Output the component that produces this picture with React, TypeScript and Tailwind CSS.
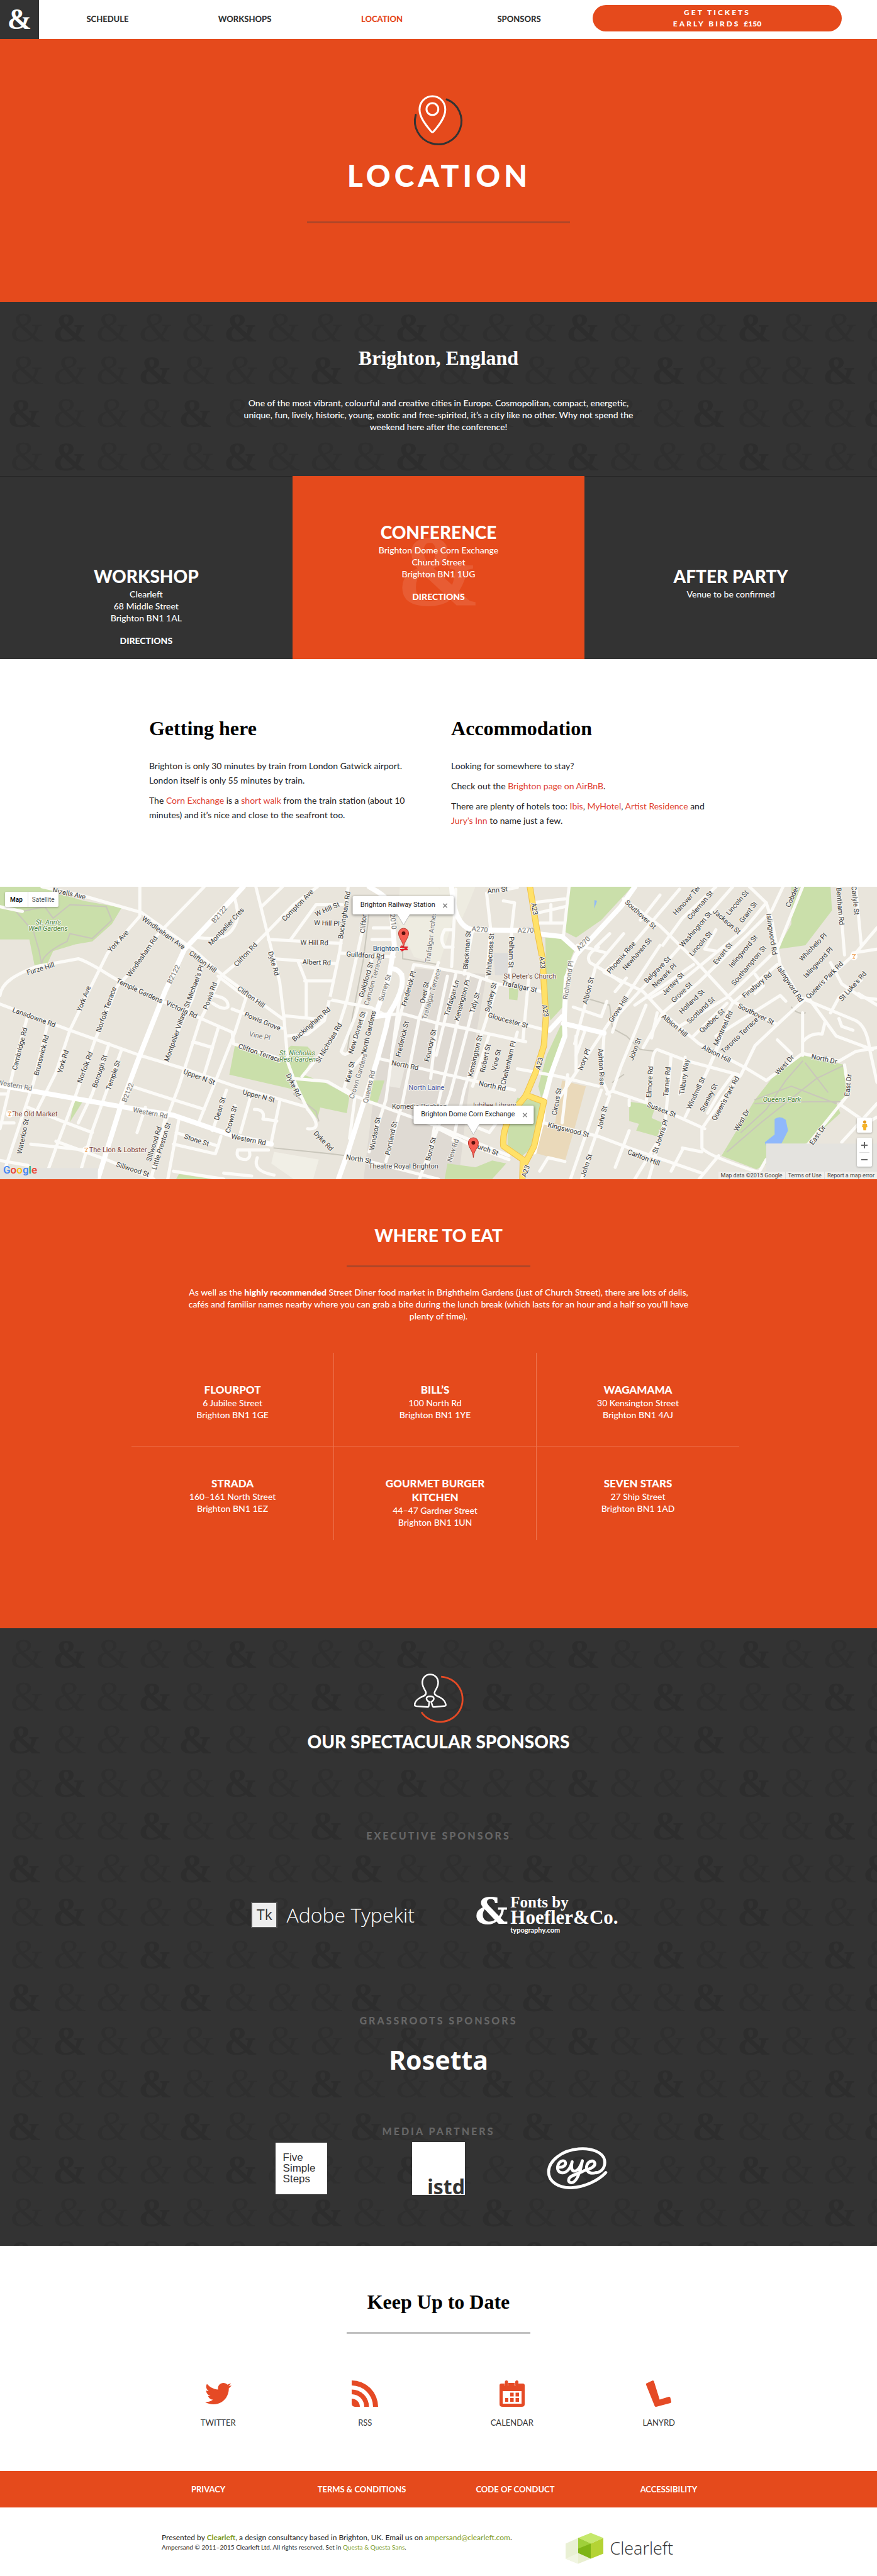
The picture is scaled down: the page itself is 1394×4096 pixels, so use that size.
import React from "react";
import { FaTwitter } from "react-icons/fa";

const SANS = "font-[Lato,'Open_Sans',sans-serif]";
const SERIF = "font-['Liberation_Serif',serif]";

/* ---------- shared pieces ---------- */

const AMP_ROWS: [number, string[]][] = [
  [41, ["r", "h", "r", "l"]],
  [109, ["r", "l", "r", "h"]],
  [177, ["h", "r", "l", "r"]],
];

function AmpersandPattern({ id }: { id: string }) {
  return (
    <svg className="absolute inset-0 h-full w-full" aria-hidden="true">
      <defs>
        <pattern id={id} width="272" height="205" patternUnits="userSpaceOnUse">
          {AMP_ROWS.map(([y, kinds]) =>
            kinds.map((k, i) => (
              <text
                key={`${y}-${i}`}
                x={43 + i * 68 - (k === "h" && i === 0 ? 4 : 0)}
                y={y + 22}
                textAnchor="middle"
                fontSize={k === "h" ? 66 : 68}
                fontFamily="Liberation Serif, serif"
                fontWeight={k === "h" ? 700 : 400}
                fontStyle={k === "l" ? "italic" : "normal"}
                fill={k === "h" ? "#2d2d2d" : "#2f2f2f"}
              >
                &amp;
              </text>
            )),
          )}
        </pattern>
      </defs>
      <rect width="100%" height="100%" fill={`url(#${id})`} />
    </svg>
  );
}

/* ---------- header ---------- */

function Header() {
  const links = ["Schedule", "Workshops", "Location", "Sponsors"];
  return (
    <header className="flex h-[62px] bg-white">
      <a href="#home" aria-label="Ampersand" className={`flex w-[62px] shrink-0 items-center justify-center bg-[#333] text-[46px] leading-none font-bold text-white ${SERIF}`}>
        &amp;
      </a>
      <nav className="grid flex-1 grid-cols-[218fr_218fr_218fr_218fr_460fr] items-center">
        {links.map((l) => (
          <a key={l} href={`#${l.toLowerCase()}`} className={`text-center text-[13px] font-black uppercase ${l === "Location" ? "text-[#e54a1c]" : "text-[#333]"}`}>
            {l}
          </a>
        ))}
        <a href="#tickets" className="mr-14 mb-1 ml-2 flex h-[42px] flex-col justify-center rounded-full bg-[#e54a1c] text-center text-[12px] leading-[18px] font-black tracking-[3px] text-white uppercase">
          <span>Get tickets</span>
          <span>
            Early birds <span className="tracking-normal">£150</span>
          </span>
        </a>
      </nav>
    </header>
  );
}

function Hero() {
  return (
    <section className="flex flex-col items-center bg-[#e54a1c] pt-[75px] pb-[125px]">
      <svg viewBox="0 0 420 420" className="h-[116px] w-[116px]" fill="none" strokeLinecap="round" aria-hidden="true">
        <path d="M79 165 A134 134 0 1 0 257 76" stroke="#333" strokeWidth="11" />
        <path d="M175 58 C132 58 101 92 101 135 C101 182 142 229 168 261 Q175 269 182 261 C210 229 249 182 249 135 C249 92 218 58 175 58Z" stroke="#fff" strokeWidth="11" />
        <circle cx="175" cy="132" r="34" stroke="#fff" strokeWidth="11" />
      </svg>
      <h1 className="pl-0.5 text-[48px] leading-[52px] font-black tracking-[6px] text-white">LOCATION</h1>
      <div className="mt-[47px] h-[3px] w-[30%] bg-[#b04628]" />
    </section>
  );
}

function Intro() {
  return (
    <section className="relative bg-[#333] pt-[70px] pb-[69px] text-center text-white">
      <AmpersandPattern id="amps-intro" />
      <div className="relative">
        <h2 className={`text-[32px] leading-[38px] font-bold ${SERIF}`}>Brighton, England</h2>
        <p className="mt-[43px] text-[14px] leading-[19px] font-medium">
          One of the most vibrant, colourful and creative cities in Europe. Cosmopolitan, compact, energetic,
          <br />
          unique, fun, lively, historic, young, exotic and free-spirited, it’s a city like no other. Why not spend the
          <br />
          weekend here after the conference!
        </p>
      </div>
    </section>
  );
}

function Venue({ title, lines, directions, main }: { title: string; lines: string[]; directions?: boolean; main?: boolean }) {
  return (
    <div className={`relative px-4 pb-5 text-center text-white ${main ? "bg-[#e54a1c] pt-[71px]" : "border-t border-[#262626] pt-[140px]"}`}>
      {main && (
        <span aria-hidden="true" className={`absolute top-[76px] left-1/2 -translate-x-1/2 text-[160px] leading-[150px] font-bold text-white/10 ${SERIF}`}>
          &amp;
        </span>
      )}
      <div className="relative">
        <h3 className="text-[28px] leading-9 font-black uppercase">{title}</h3>
        <p className="mt-px text-[14px] leading-[19px] font-medium">
          {lines.map((l) => (
            <span key={l} className="block">
              {l}
            </span>
          ))}
        </p>
        {directions && (
          <a href="#map" className="mt-[17px] block text-[14px] leading-[19px] font-black uppercase">
            Directions
          </a>
        )}
      </div>
    </div>
  );
}

function Venues() {
  return (
    <section className="grid grid-cols-3 bg-[#333]">
      <Venue title="Workshop" lines={["Clearleft", "68 Middle Street", "Brighton BN1 1AL"]} directions />
      <Venue title="Conference" lines={["Brighton Dome Corn Exchange", "Church Street", "Brighton BN1 1UG"]} directions main />
      <Venue title="After party" lines={["Venue to be confirmed"]} />
    </section>
  );
}

function A({ children }: { children: React.ReactNode }) {
  return (
    <a href="#link" className="text-[#e0402f]">
      {children}
    </a>
  );
}

function Travel() {
  return (
    <section className="grid grid-cols-2 gap-x-[54px] bg-white pt-[90px] pr-[18%] pb-[94px] pl-[17%] text-[14px] leading-[23px] text-[#222]">
      <div>
        <h2 className={`mb-7 text-[32px] leading-10 font-bold text-black ${SERIF}`}>Getting here</h2>
        <p>
          Brighton is only 30 minutes by train from London Gatwick airport.
          <br />
          London itself is only 55 minutes by train.
        </p>
        <p className="mt-[9px]">
          The <A>Corn Exchange</A> is a <A>short walk</A> from the train station (about 10
          <br />
          minutes) and it’s nice and close to the seafront too.
        </p>
      </div>
      <div>
        <h2 className={`mb-7 text-[32px] leading-10 font-bold text-black ${SERIF}`}>Accommodation</h2>
        <p>Looking for somewhere to stay?</p>
        <p className="mt-[9px]">
          Check out the <A>Brighton page on AirBnB</A>.
        </p>
        <p className="mt-[9px]">
          There are plenty of hotels too: <A>Ibis</A>, <A>MyHotel</A>, <A>Artist Residence</A> and
          <br />
          <A>Jury’s Inn</A> to name just a few.
        </p>
      </div>
    </section>
  );
}

/* ---------- map ---------- */

/* Survey grid: 3136 units across, 27..1541 down. */
const KX = 0.4445;
const KY = 0.307;

const PARKS = [
  "M0 27H180L230 70L300 100L435 135L400 220L330 310L270 325L190 360L165 440L125 445L105 300L0 300Z",
  "M840 850L985 920L1040 850L1100 855L1125 895L1085 1000L1160 1040L1250 1110L1240 1200L1145 1170L1135 1230L1060 1080L820 1000Z",
  "M1335 1030H1375L1350 1145H1320Z",
  "M265 1130H300L250 1245Z",
  "M2030 27H2260L2150 200L2060 290L2020 260Z",
  "M1950 290L2000 290L2055 350L2025 460L2018 640L1968 720L1955 600Z",
  "M2005 745L2030 750L1990 960L1935 1120L1925 1060L1955 900Z",
  "M1850 1120L1935 1140L1910 1370L1860 1430L1815 1400L1815 1260Z",
  "M2250 1140L2345 1160L2330 1225L2370 1250L2350 1320L2275 1290L2285 1255L2250 1240Z",
  "M2870 900L3020 950L3035 1100L2990 1150L3005 1200L2890 1350L2705 1490L2580 1420L2700 1130L2760 1020Z",
  "M2830 27H2970L2975 150L2880 330L2780 350L2830 220Z",
  "M1600 1460L1700 1480L1760 1445L1810 1460L1760 1541H1590Z",
  "M1820 550H1855L1850 615L1820 610Z",
  "M640 1515L760 1541H630Z",
];

const BLOCKS: [string, string][] = [
  ["M1480 450L1740 480L1690 900L1640 1541H1300L1350 950L1400 700Z", "#dfdad3"],
  ["M1430 27H1568L1620 200L1570 430L1480 390L1420 200Z", "#eeece1"],
  ["M1570 27H1700L1680 100L1650 200L1600 180Z", "#eeece1"],
  ["M1390 950H1450L1430 1070L1390 1060Z", "#ebe8e1"],
  ["M980 1400L1140 1440L1120 1541H1050L970 1460Z", "#f1efe6"],
  ["M2010 1030L2095 1060L2060 1250L2020 1450L1912 1405L1945 1250H1985Z", "#ead9ba"],
  ["M1765 370H1820V485H1770Z", "#dddcda"],
];

const MAIN_ROADS = [
  "M870 27L830 90L660 350L590 570L500 900L430 1170L350 1541",
  "M0 1055L430 1165L620 1210L720 1260L840 1320L970 1360",
  "M1320 27C1360 60 1390 80 1400 150L1410 330L1390 500L1340 700L1390 690L1380 760L1350 920L1240 1420L1210 1541",
  "M1400 450C1460 460 1440 560 1410 640L1385 700",
  "M1615 27C1620 140 1640 250 1700 250L1920 255",
  "M2270 27L2220 130L2060 380L2025 500L2018 700L2020 800L1970 1000L1945 1140L1940 1230L1910 1400",
  "M1920 270L2010 285L2060 350M2010 700L1965 770M2015 735L2160 785",
];

const ROADS = [
  "M0 130L80 155M150 27L300 75L505 160L690 350L800 490L1010 710",
  "M500 27V180L385 370L320 560L250 770L200 990L130 1190",
  "M730 27L560 280L460 480L420 540L340 820L270 1110L210 1340L160 1541",
  "M0 590C5 520 60 480 130 440L280 400C330 420 400 500 430 515L580 620L720 710L830 780L835 840L1030 930",
  "M0 635L250 770L500 900L660 970L840 1060L1090 1165",
  "M840 90C850 150 860 190 830 250Q800 310 710 290",
  "M1135 27L1050 120L950 270L840 430L790 490L740 650L715 720L640 1060L590 1250L540 1541",
  "M720 450L690 600L650 730L590 940M780 490L880 600L840 780L780 1000L710 1250",
  "M915 27L960 290L1000 520L1015 700L1030 940L1060 1060L1100 1180C1130 1230 1150 1290 1100 1280",
  "M1010 27L935 130M960 300L1220 320M1225 120H1130L1040 300M980 400L1200 425M1065 410L1095 520V700M1090 515H1190M1015 695L1150 715",
  "M1245 27L1215 360L1180 600L1160 720L1100 790L1025 800M1175 610L1330 655L1390 700",
  "M1310 160L1240 620L1200 800L1080 1010M1335 240H1410M1330 300H1410M1215 370L1410 390",
  "M1390 690L1440 685L1568 735L1680 765M1330 400L1270 700L1220 880Q1240 920 1260 850L1310 680",
  "M1350 915L1568 990L1840 1080M1270 1110L1320 1140L1568 1270L1700 1350L1820 1420",
  "M1045 1020L1170 1035L1260 1110M1300 900L1250 980L1230 1070L1270 1110L1250 1330",
  "M760 590Q820 600 815 650Q800 670 760 630M830 660L1010 760M690 830L760 860L730 1000M780 760L730 1000",
  "M470 1060L620 1130L730 1180M100 690L60 900L0 1280M170 740L120 1040L20 1480M390 840L330 1100L280 1250M435 870L380 1090L330 1290L280 1541",
  "M0 1100H25M0 1250H50M100 1170L220 1240L330 1300M200 1345L380 1440L550 1541M110 1360L300 1390M0 1445L100 1470",
  "M520 1170L490 1300M590 1230L540 1541M640 1230L600 1541M630 1300L780 1370L790 1320M620 1360L770 1410L780 1370",
  "M810 1080L760 1290M840 1160L810 1300M895 1120L860 1300M1000 1140L970 1350M910 1180Q950 1180 940 1230L990 1240M620 1500L800 1541",
  "M850 1390H960M850 1390Q840 1440 880 1440Q900 1430 890 1390M920 1430Q900 1500 980 1520M800 1510L900 1525",
  "M1440 480L1380 1130L1320 1400M1480 430L1430 700L1400 900M1568 420L1500 700L1440 1140L1380 1450M1600 490L1560 760L1540 1020M1480 430L1568 450",
  "M1675 490L1570 1130L1530 1470M1630 480L1560 900M1720 500L1610 1100L1500 1541M1780 530L1720 800L1660 1080L1620 1340M1240 1420L1568 1541",
  "M1568 450L1680 480L1780 530L1940 570M1630 40L1615 440M1740 60L1755 250L1740 500M1690 250L1660 480M1830 250L1820 520M1740 60L1850 30",
  "M1620 250H1590Q1570 300 1590 340H1620M1800 100L1840 110L1830 240M1900 110L2020 90M1930 160L2020 130M1930 215H2020M1970 120V215M2035 27L2015 280",
  "M1745 690L1940 765M1568 735L1620 745L1720 780L1880 830M1890 510L1870 820M1850 780L1790 1080M1750 790L1690 1060M1850 970L2000 1010L2140 1060",
  "M2065 330L2170 370M2140 340Q2090 380 2110 420L2170 470M2230 270L2130 440L2085 680L2055 840M2180 270L2130 340",
  "M2230 90L2360 230L2480 400L2620 620L2780 740M2360 70L2290 200M2430 40L2230 380L2160 470L2300 570L2370 680L2500 840L2660 960L2740 1030",
  "M2560 27L2440 190L2370 330M2620 27L2400 390L2210 690L2190 780M2560 250L2520 350L2560 360M2680 27L2740 110L2660 250L2450 500L2330 600",
  "M2740 110L2760 200L2790 430L2860 600L3060 720Q3100 750 3110 870L3136 1040M2800 27L2760 150L2500 520L2370 680L2300 860",
  "M2870 27L2780 350L2600 600L2430 750M2480 430L2270 640M2360 330L2160 770L2000 1120M2240 500L2200 570M2220 520L2170 470",
  "M2780 430L2620 630L2600 680L2570 850L2530 980M2600 630L2480 800M2700 480L2730 540L2700 580",
  "M3000 27L3020 380M3136 240L3060 370L2870 620L2780 740L2700 850L2650 1000L2590 1110L2510 1280V1380Q2530 1420 2710 1505",
  "M3060 27L3080 330M3050 370L3136 350M2970 420L3010 530L3080 600L3136 610M3080 510L3000 600L2970 680M2890 600L2990 800L3120 870",
  "M2560 800L2790 590L2810 620M2870 680L2870 900M2870 830Q2900 780 2940 790L2950 730M3000 710L3010 750L3050 770M2780 820L2830 890",
  "M2870 890L3000 930L3060 880L3136 860M2740 1030L2870 890M3020 950L3035 1100L2990 1180L2890 1360M3010 1160L3100 1250L3136 1220",
  "M2090 780L2060 900M2160 790L2150 1020L2180 1110L2110 1400L2080 1541M2170 1100L2190 1085L2320 1150L2520 1280",
  "M2350 870Q2330 880 2330 1000L2310 1140M2350 870L2460 930L2640 1000M2400 900L2380 1230L2320 1541M2450 910L2430 1100",
  "M2580 800L2530 980L2450 1220M2620 1000L2570 1100L2530 1200M2310 640L2220 960L2190 1085M2350 680L2330 810M2150 1080L2040 1541",
  "M1945 1250L2140 1320L2250 1380L2510 1510M2250 1290L2200 1480M2380 1280L2270 1541M2440 1390L2400 1500M2440 1380L2510 1400",
  "M2030 1000L2010 1250M2060 800V980M1930 1500L1960 1430L2020 1450M2250 1130V1160M2050 650L2150 700L2170 620M2570 1420L2500 1541",
  "M1568 1280L1690 1370L1820 1440M1700 1270L1750 1300L1780 1240M3136 1150L3010 1350M3070 580L3136 640M2740 1440L2700 1541",
];

const PATHS = [
  "M60 160L120 260L140 360L150 440M150 440Q140 380 240 310L250 270L330 295L400 200L380 130L250 120L190 190L160 130L80 155",
  "M1320 160L1300 400L1260 700L1240 900M2110 610L2180 640L2190 760L2240 800L2290 870L2350 880M2190 1040L2230 1000M2270 1541",
  "M2700 1130L2830 1060L2990 1150M2700 1150L2900 1140H3010M2870 930L2810 1030L2740 1180L2650 1300M2880 940L2960 1090M3020 950L2920 1020L2720 1250L2600 1400",
  "M1050 1100L1130 1190L1140 1240M980 1380L1180 1410L1240 1420M1570 430L1440 400L1440 340M2830 650Q2850 690 2880 680",
];

const A23 = "M1895 27L1920 250L1940 400L1952 700L1945 850L1915 990L1880 1110L1830 1200Q1795 1290 1800 1370L1870 1440L1868 1541M1880 1105L1945 1140L1910 1370L1870 1480";

type Label = [string, number, number, number, number, string?];
const LABELS: Label[] = [
  ["Nizells Ave", 195, 45, 300, 78], ["York Ave", 392, 355, 452, 262], ["Windlesham Rd", 463, 480, 553, 295],
  ["Windlesham Ave", 518, 195, 652, 335], ["Furze Hill", 100, 470, 190, 430], ["B2122", 760, 210, 808, 130, "g"],
  ["B2122", 604, 525, 636, 435, "g"], ["B2122", 443, 1140, 470, 1045, "g"], ["Montpelier Cres", 762, 305, 855, 160],
  ["Compton Ave", 1018, 190, 1110, 55], ["W Hill St", 1135, 165, 1205, 120], ["W Hill Pl", 1127, 212, 1210, 217],
  ["W Hill Rd", 1080, 315, 1168, 317], ["Buckingham Rd", 1218, 285, 1243, 62], ["Clifton Rd", 843, 430, 912, 325],
  ["Clifton Hill", 683, 370, 768, 460], ["Clifton Hill", 855, 552, 942, 642], ["Dyke Rd", 968, 368, 990, 480],
  ["Albert Rd", 1087, 415, 1178, 420], ["Guildford Rd", 1245, 375, 1368, 388], ["Temple Gardens", 425, 515, 573, 615],
  ["Victoria Rd", 600, 628, 700, 695], ["Powis Rd", 735, 655, 766, 528], ["St Michael's Pl", 668, 640, 718, 445],
  ["York Ave", 283, 665, 315, 548], ["Norfolk Terrace", 353, 768, 405, 558], ["Lansdowne Rd", 52, 665, 192, 740],
  ["Cambridge Rd", 53, 965, 87, 768], ["Brunswick Rd", 130, 995, 165, 803], ["York Rd", 214, 985, 236, 878],
  ["Norfolk Rd", 285, 1033, 322, 890], ["Borough St", 338, 1060, 374, 905], ["Temple St", 388, 1070, 420, 935],
  ["Montpelier Villas", 597, 920, 653, 690], ["Powis Grove", 880, 688, 998, 758], ["Vine Pl", 898, 790, 960, 808, "g"],
  ["Clifton Terrace", 860, 853, 998, 922], ["Buckingham Rd", 1060, 805, 1165, 672], ["St Nicholas Rd", 1138, 925, 1212, 745],
  ["New Dorset St", 1255, 880, 1297, 683], ["North Gardens", 1300, 885, 1334, 680], ["Guildford St", 1292, 590, 1325, 425],
  ["Camden Terrace", 1314, 615, 1352, 415, "g"], ["Surrey St", 1360, 620, 1390, 480, "g"], ["Clifton", 1296, 260, 1302, 170],
  ["2010", 1404, 170, 1410, 245, "g"],
  ["Frederick Pl", 1445, 635, 1477, 472], ["Over St", 1510, 625, 1524, 525], ["Trafalgar Terrace", 1522, 685, 1562, 480, "g"],
  ["Frederick St", 1424, 898, 1452, 733], ["Foundry St", 1526, 925, 1550, 773], ["Kew St", 1243, 1033, 1258, 938],
  ["Crown Gardens", 1261, 1100, 1300, 915, "g"], ["Queens Rd", 1306, 1145, 1333, 980, "g"], ["Western Rd", 475, 1180, 600, 1215, "g"],
  ["Western Rd", 0, 1040, 106, 1068, "g"], ["Western Rd", 833, 1320, 945, 1352], ["Upper N St", 662, 985, 763, 1038],
  ["Upper N St", 873, 1090, 978, 1130], ["Dyke Rd", 1032, 1000, 1068, 1108], ["Dean St", 774, 1230, 797, 1122],
  ["Crown St", 814, 1295, 838, 1168], ["Waterloo St", 70, 1400, 93, 1240], ["Sillwood Rd", 532, 1440, 568, 1278],
  ["Little Preston St", 552, 1480, 600, 1260], ["Stone St", 664, 1320, 743, 1357], ["Sillwood St", 422, 1465, 528, 1515],
  ["Windsor St", 1330, 1382, 1350, 1230], ["Portland St", 1386, 1408, 1410, 1250], ["Bond St", 1530, 1440, 1550, 1330],
  ["North Rd", 1405, 938, 1492, 963], ["North St", 1248, 1428, 1318, 1445], ["Dyke Rd", 1132, 1305, 1182, 1380],
  ["Trafalgar Arches", 1530, 405, 1550, 170, "g"],
  ["Ann St", 1746, 48, 1811, 38], ["A23", 1908, 110, 1916, 172], ["A23", 1938, 388, 1942, 450], ["A23", 1947, 638, 1954, 700],
  ["A23", 1922, 975, 1934, 910], ["A23", 1872, 1530, 1886, 1470], ["A270", 1688, 243, 1744, 250, "g"], ["A270", 1852, 253, 1908, 253, "g"],
  ["A270", 2066, 350, 2105, 290, "g"], ["Blackman St", 1664, 445, 1674, 265], ["Whitecross St", 1747, 475, 1757, 280],
  ["Pelham St", 1830, 292, 1828, 440], ["Trafalgar St", 1800, 525, 1915, 560], ["Richmond Pl", 2020, 612, 2042, 408, "g"],
  ["Trafalgar Ln", 1598, 685, 1632, 520], ["Kensington Pl", 1633, 710, 1670, 518], ["Tidy St", 1688, 672, 1706, 582],
  ["Sydney St", 1742, 668, 1766, 530], ["Gloucester St", 1752, 692, 1882, 745], ["Kensington St", 1682, 1000, 1714, 805],
  ["Robert St", 1725, 980, 1745, 850], ["Vine St", 1766, 972, 1782, 875], ["Cheltenham Pl", 1800, 1040, 1834, 838],
  ["North Rd", 1717, 1045, 1804, 1072], ["Albion St", 2092, 628, 2114, 502], ["Grove Hill", 2184, 720, 2238, 602],
  ["Ivory Pl", 2074, 975, 2102, 868], ["Ashton Rise", 2148, 873, 2154, 1045], ["John St", 2256, 920, 2284, 815],
  ["John St", 2144, 1275, 2162, 1168], ["John St", 2084, 1522, 2108, 1418], ["Circus St", 1982, 1203, 1998, 1075],
  ["Kingswood St", 1966, 1260, 2100, 1310], ["Carlton Hill", 2250, 1400, 2355, 1458], ["Sussex St", 2320, 1155, 2412, 1207],
  ["Elmore Rd", 2320, 1110, 2326, 965], ["Tarner Rd", 2380, 1105, 2388, 968], ["Tilbury Way", 2438, 1092, 2454, 930],
  ["Windmill St", 2464, 1168, 2512, 1022], ["Stanley St", 2512, 1183, 2556, 1055], ["Queen's Park Rd", 2554, 1228, 2634, 1018],
  ["St John's Pl", 2342, 1400, 2380, 1240], ["Phoenix Rise", 2178, 465, 2264, 320], ["Newhaven St", 2235, 445, 2320, 305],
  ["Southover St", 2242, 105, 2340, 235], ["Belgrave St", 2310, 515, 2390, 397], ["Newark Pl", 2338, 540, 2412, 435],
  ["Jersey St", 2374, 577, 2438, 480], ["Grove St", 2406, 617, 2468, 530], ["Holland St", 2436, 672, 2510, 570],
  ["Scotland St", 2462, 725, 2548, 608], ["Quebec St", 2508, 772, 2583, 670], ["Montreal Rd", 2560, 838, 2610, 680],
  ["Toronto Terrace", 2586, 877, 2702, 715], ["Albion Hill", 2374, 697, 2452, 793], ["Albion Hill", 2516, 858, 2608, 925],
  ["Southover St", 2645, 643, 2762, 728], ["Washington St", 2440, 325, 2534, 168], ["Coleman St", 2466, 185, 2540, 60],
  ["Hanover Ter", 2414, 163, 2496, 30], ["Lincoln St", 2604, 163, 2668, 55], ["Jackson St", 2558, 155, 2640, 258],
  ["Grant St", 2650, 205, 2700, 110], ["Lincoln St", 2472, 375, 2538, 267], ["Ewart St", 2558, 418, 2610, 325],
  ["Islingword St", 2614, 435, 2700, 287], ["Southampton St", 2624, 525, 2730, 343], ["Finsbury Rd", 2662, 590, 2752, 480],
  ["Islingword Rd", 2750, 175, 2770, 370], ["Islingword Rd", 2788, 448, 2864, 612], ["Whichelo Pl", 2866, 400, 2948, 277],
  ["Islingword Pl", 2880, 488, 2970, 350], ["Queen's Park Rd", 2890, 595, 3006, 425], ["St Luke's Rd", 3008, 607, 3090, 475],
  ["Bentham Rd", 3000, 40, 3010, 215], ["Carlyle St", 3054, 30, 3064, 166], ["Cobden", 2820, 118, 2846, 32],
  ["North Dr", 2905, 905, 2990, 932], ["West Dr", 2780, 988, 2830, 910], ["West Dr", 2632, 1285, 2672, 1187],
  ["East Dr", 3028, 1105, 3036, 1005], ["East Dr", 2902, 1355, 2944, 1270], ["New Rd", 1608, 1440, 1630, 1345, "g"],
  ["Church St", 1690, 1360, 1772, 1402],
];

const PLACES: [string, number, number, string][] = [
  ["The Old Market", 122, 1203, "#7d4035"], ["The Lion & Lobster", 422, 1390, "#7d4035"], ["Brighton", 1380, 347, "#25507a"],
  ["North Laine", 1525, 1066, "#4a5ea8"], ["St Peter's Church", 1895, 490, "#6a4b43"], ["Jubilee Library", 1765, 1157, "#6a4b43"],
  ["Theatre Royal Brighton", 1443, 1474, "#4d4a48"], ["Komedia Brighton", 1500, 1165, "#4d4a48"],
];

const GREENS: [string, number, number][] = [
  ["St. Ann's", 173, 208], ["Well Gardens", 172, 243], ["St. Nicholas", 1063, 886], ["Rest Garden", 1064, 921], ["Queens Park", 2796, 1128],
];

function MapDrawing() {
  const px = (x: number) => x * KX;
  const py = (y: number) => (y - 27) * KY;
  const keep = "[&>path]:[vector-effect:non-scaling-stroke]";
  return (
    <svg viewBox="0 0 1394 465" preserveAspectRatio="xMidYMid slice" className="h-full w-full font-[Roboto,sans-serif]" role="img" aria-label="Map of Brighton">
      <rect width="1394" height="465" fill="#e9e5dc" />
      <g transform={`scale(${KX} ${KY}) translate(0 -27)`} fill="none" strokeLinejoin="round" strokeLinecap="round" className={keep}>
        {BLOCKS.map(([d, c]) => <path key={d} d={d} fill={c} />)}
        {PARKS.map((d) => <path key={d} d={d} fill="#cadfaa" />)}
        <path d="M2770 1230Q2790 1210 2810 1235L2818 1290L2790 1370L2750 1410L2735 1350L2770 1310Z" fill="#8fb8fb" />
        <path d="M2126 95L2135 100L2125 140Z" fill="#8fb8fb" />
        {PATHS.map((d) => <path key={d} d={d} stroke="#c9c6bb" strokeWidth="2" />)}
        {ROADS.map((d) => <path key={d} d={d} stroke="#fcfbf8" strokeWidth="5" />)}
        {MAIN_ROADS.map((d) => <path key={d} d={d} stroke="#fff" strokeWidth="8" />)}
        <path d={A23} stroke="#efc14b" strokeWidth="10" />
        <path d={A23} stroke="#ffe168" strokeWidth="8" />
        <circle cx="1177" cy="605" r="10" fill="#e9e5dc" />
        <path d="M0 1484H350V1541H0Z" fill="#e4e3df" />
        <path d="M2740 1357H3136V1503H2740Z" fill="#e4e3df" />
      </g>
      <g fontSize="11" textAnchor="middle" stroke="#f5f3ee" strokeWidth="2" paintOrder="stroke" strokeLinejoin="round">
        {LABELS.map(([t, x1, y1, x2, y2, g], i) => {
          const a = (Math.atan2(py(y2) - py(y1), px(x2) - px(x1)) * 180) / Math.PI;
          return (
            <text key={i} fill={g ? "#777" : "#3c3c3c"} transform={`translate(${px((x1 + x2) / 2)} ${py((y1 + y2) / 2)}) rotate(${a})`} dy="4">
              {t}
            </text>
          );
        })}
        {PLACES.map(([t, x, y, c]) => (
          <text key={t} x={px(x)} y={py(y)} dy="4" fill={c}>
            {t}
          </text>
        ))}
        {GREENS.map(([t, x, y]) => (
          <text key={t} x={px(x)} y={py(y)} dy="4" fill="#4f8a3c" fontStyle="italic">
            {t}
          </text>
        ))}
      </g>
      <g stroke="#e3202c" strokeWidth="2" fill="none">
        <path d="M636 96H648M636 100H648M638 94L646 98L638 102" />
      </g>
      {[[34, 1203], [308, 1390], [3053, 388]].map(([x, y]) => (
        <g key={x} transform={`translate(${px(x)} ${py(y)})`}>
          <circle r="6" fill="#fff" />
          <path d="M-3-3H3L0 0V3M-2 3H2" stroke="#e98a2c" fill="none" />
        </g>
      ))}
    </svg>
  );
}

function Pin() {
  return (
    <svg viewBox="0 0 18 33" className="block h-[33px] w-[18px]" aria-hidden="true">
      <path d="M9 32.5C8.600 22 1 17 1 9a8 8 0 0 1 16 0c0 8-7.600 13-8 23.500Z" fill="#f75f53" stroke="#b8352b" strokeWidth="1" />
      <circle cx="9" cy="9" r="3" fill="#5c120d" />
    </svg>
  );
}

function InfoWindow({ label, place }: { label: string; place: string }) {
  return (
    <div className={`absolute flex -translate-x-1/2 flex-col items-center font-[Roboto,sans-serif] ${place}`}>
      <div className="flex h-[29px] items-center gap-2.5 rounded-[2px] bg-white pr-2 pl-3 text-[11px] whitespace-nowrap text-[#222] shadow-[0_1px_4px_rgba(0,0,0,0.5)]">
        <span>{label}</span>
        <button type="button" aria-label="Close" className="flex h-3 w-3 items-center justify-center text-[#888]">
          <svg viewBox="0 0 10 10" className="h-2 w-2" stroke="currentColor" strokeWidth="2">
            <path d="M1 1L9 9M9 1L1 9" />
          </svg>
        </button>
      </div>
      <svg viewBox="0 0 20 18" className="block h-[18px] w-5" aria-hidden="true">
        <path d="M0 0L10 17L20 0" fill="#fff" stroke="#bbb" strokeWidth="1" />
      </svg>
      <div className="mt-[3px]">
        <Pin />
      </div>
    </div>
  );
}

function BrightonMap() {
  const logo: [string, string][] = [["G", "text-[#4285f4]"], ["o", "text-[#ea4335]"], ["o", "text-[#fbbc05]"], ["g", "text-[#4285f4]"], ["l", "text-[#34a853]"], ["e", "text-[#ea4335]"]];
  return (
    <section id="map" className="relative h-[465px] overflow-hidden font-[Roboto,sans-serif]">
      <MapDrawing />
      <div className="absolute top-2 left-2 flex rounded-[2px] bg-white text-[10px] shadow-[0_1px_3px_rgba(0,0,0,0.3)]">
        <button type="button" className="h-6 border-r border-[#ddd] px-2 font-medium text-black">Map</button>
        <button type="button" className="h-6 px-1.5 text-[#555]">Satellite</button>
      </div>
      <InfoWindow label="Brighton Railway Station" place="top-[15px] left-[46%]" />
      <InfoWindow label="Brighton Dome Corn Exchange" place="top-[348px] left-[54%]" />
      <div className="absolute bottom-1 left-[5px] text-[17px] leading-[22px] font-medium" role="img" aria-label="Google">
        {logo.map(([c, cls], i) => (
          <span key={i} className={cls}>
            {c}
          </span>
        ))}
      </div>
      <div className="absolute right-2 bottom-5 flex w-6 flex-col gap-2">
        <button type="button" aria-label="Street view" className="flex h-6 items-center justify-center rounded-[2px] bg-white shadow-[0_1px_3px_rgba(0,0,0,0.3)]">
          <svg viewBox="0 0 12 20" className="h-[17px] w-[11px]" fill="#f5b32b">
            <circle cx="6" cy="3.500" r="3" fill="#e59a1c" />
            <path d="M2 7h8l1 6-2 .5L8.500 19h-5L3 13.500 1 13Z" />
          </svg>
        </button>
        <div className="flex flex-col items-center rounded-[2px] bg-white text-[#666] shadow-[0_1px_3px_rgba(0,0,0,0.3)]">
          <button type="button" aria-label="Zoom in" className="flex h-[23px] w-full items-center justify-center">
            <svg viewBox="0 0 10 10" className="h-2.5 w-2.5" stroke="currentColor" strokeWidth="2"><path d="M5 0V10M0 5H10" /></svg>
          </button>
          <div className="h-px w-4 bg-[#ddd]" />
          <button type="button" aria-label="Zoom out" className="flex h-[22px] w-full items-center justify-center">
            <svg viewBox="0 0 10 10" className="h-2.5 w-2.5" stroke="currentColor" strokeWidth="2"><path d="M0 5H10" /></svg>
          </button>
        </div>
      </div>
      <div className="absolute right-0 bottom-0 flex h-3 items-center bg-[#f0eeea] text-[9px] leading-3 text-[#444]">
        <span className="px-1">Map data ©2015 Google</span>
        <a href="#terms" className="border-l border-[#ddd] px-1">Terms of Use</a>
        <a href="#report" className="border-l border-[#ddd] px-1">Report a map error</a>
      </div>
    </section>
  );
}

/* ---------- where to eat ---------- */

const EATS = [
  ["Flourpot", "6 Jubilee Street", "Brighton BN1 1GE"],
  ["Bill’s", "100 North Rd", "Brighton BN1 1YE"],
  ["Wagamama", "30 Kensington Street", "Brighton BN1 4AJ"],
  ["Strada", "160–161 North Street", "Brighton BN1 1EZ"],
  ["Gourmet Burger Kitchen", "44–47 Gardner Street", "Brighton BN1 1UN"],
  ["Seven Stars", "27 Ship Street", "Brighton BN1 1AD"],
];

function WhereToEat() {
  return (
    <section className="bg-[#e54a1c] pt-[69px] pb-[140px] text-center text-[14px] leading-[19px] font-medium text-white">
      <h2 className="text-[28px] leading-10 font-black">WHERE TO EAT</h2>
      <div className="mx-auto mt-7 h-[3px] w-[21%] bg-[#b04628]" />
      <p className="mt-[30px]">
        As well as the <strong className="font-black">highly recommended</strong> Street Diner food market in Brighthelm Gardens (just of Church Street), there are lots of delis,
        <br />
        cafés and familiar names nearby where you can grab a bite during the lunch break (which lasts for an hour and a half so you’ll have
        <br />
        plenty of time).
      </p>
      <ul className="mt-[49px] mr-[219px] ml-[15%] grid grid-cols-3">
        {EATS.map(([name, l1, l2], i) => (
          <li key={name} className={`h-[149px] border-[#ee7450] px-12 pt-12 ${i % 3 < 2 ? "border-r" : ""} ${i < 3 ? "border-b" : ""}`}>
            <h3 className="text-[17px] leading-[22px] font-black uppercase">{name}</h3>
            <p>{l1}</p>
            <p>{l2}</p>
          </li>
        ))}
      </ul>
    </section>
  );
}

/* ---------- sponsors ---------- */

function Tier({ children, gap }: { children: string; gap: string }) {
  return <h3 className={`text-[16px] leading-6 font-black tracking-[3px] text-[#666] uppercase ${gap}`}>{children}</h3>;
}

function Sponsors() {
  return (
    <section className="relative bg-[#333] pt-[58px] pb-[78px] text-white">
      <AmpersandPattern id="amps-sponsors" />
      <div className="relative flex flex-col items-center">
        <svg viewBox="0 0 420 340" className="h-[94px] w-[116px]" fill="none" aria-hidden="true">
          <path d="M225 69A130 130 0 1 1 112 273" stroke="#e54a25" strokeWidth="10" />
          <path
            d="M162 56C133 56 117 78 117 103C117 130 133 142 138 160C141 178 120 180 104 190C86 200 73 216 73 232Q73 238 84 239L148 243Q153 243 154 236L157 214C146 208 140 202 141 193C143 178 181 178 183 193C184 202 178 208 168 214L175 236Q177 243 182 243L244 238Q254 237 252 228C248 212 240 200 222 190C206 180 184 178 187 160C192 142 208 130 208 103C208 78 191 56 162 56Z"
            stroke="#fff"
            strokeWidth="9"
            strokeLinejoin="round"
          />
        </svg>
        <h2 className="mt-2.5 text-[28px] leading-9 font-black">OUR SPECTACULAR SPONSORS</h2>

        <Tier gap="mt-[120px]">Executive sponsors</Tier>
        <div className="mt-[83px] flex h-[61px] gap-24 pr-3">
          <a href="#typekit" className="flex items-center gap-3.5 font-['Open_Sans',sans-serif]">
            <span className="flex h-[42px] w-[42px] justify-center border-2 border-[#555] bg-[#eee] pt-1 text-[23px] leading-7 text-[#333]">Tk</span>
            <span className="text-[32px] leading-[42px] font-light">Adobe Typekit</span>
          </a>
          <a href="#typography" className={`flex gap-1 font-bold ${SERIF}`}>
            <span className="font-['DejaVu_Serif',serif] text-[58px] leading-[50px]">&amp;</span>
            <span className="flex flex-col">
              <span className="text-[25px] leading-[22px]">Fonts by</span>
              <span className="text-[31px] leading-[26px]">Hoefler&amp;Co.</span>
              <span className="font-[Lato,sans-serif] text-[11px] leading-[13px]">typography.com</span>
            </span>
          </a>
        </div>

        <Tier gap="mt-[126px]">Grassroots sponsors</Tier>
        <a href="#rosetta" className="mt-[26px] font-['Noto_Sans',sans-serif] text-[41px] leading-[48px] font-bold">Rosetta</a>

        <Tier gap="mt-[78px]">Media partners</Tier>
        <div className="mt-px grid h-[91px] w-[47%] grid-cols-3 items-center justify-items-center">
          <a href="#fivesimplesteps" className="flex h-[82px] w-[82px] flex-col justify-center bg-white pl-3 font-['Liberation_Sans',sans-serif] text-[17px] leading-[17px] font-medium text-[#333]">
            <span>Five</span>
            <span>Simple</span>
            <span>Steps</span>
          </a>
          <a href="#istd" className="flex h-[84px] w-[84px] items-end justify-end overflow-hidden bg-white font-['Noto_Sans',sans-serif] text-[32px] leading-[26px] font-bold text-[#333]">
            istd
          </a>
          <a href="#eye" aria-label="eye">
            <svg viewBox="0 0 420 330" className="h-[91px] w-[116px]" fill="none" stroke="#fff" strokeLinecap="round" strokeLinejoin="round">
              <path d="M328 192C365 185 382 155 377 120C368 72 300 48 228 54C130 62 55 122 54 186C53 245 115 280 185 278C262 275 342 236 384 190" strokeWidth="17" />
              <path d="M112 160C140 162 155 148 151 132C146 116 120 120 109 145C99 172 112 193 136 192C160 190 180 165 190 128C183 160 186 182 202 182C222 182 240 155 249 122C240 170 222 235 194 247C178 253 166 244 171 228C178 205 225 200 262 178C290 170 322 160 321 138C317 115 285 122 275 147C267 172 280 193 304 194Q318 194 328 190" strokeWidth="17" />
            </svg>
          </a>
        </div>
      </div>
    </section>
  );
}

/* ---------- footer ---------- */

function KeepUp() {
  const icon = "block h-[42px] w-[42px]";
  const items = [
    { name: "Twitter", art: <FaTwitter className={icon} /> },
    {
      name: "RSS",
      art: (
        <svg viewBox="0 0 42 42" className={icon} fill="currentColor">
          <path d="M0 29a13 13 0 0 1 13 13H5a5 5 0 0 1-5-5Z" />
          <path d="M0 14.500A27.500 27.500 0 0 1 27.500 42H20A20 20 0 0 0 0 22Z" />
          <path d="M0 0A42 42 0 0 1 42 42H34A34 34 0 0 0 0 8Z" />
        </svg>
      ),
    },
    {
      name: "Calendar",
      art: (
        <svg viewBox="0 0 42 42" className={icon} fill="currentColor">
          <path fillRule="evenodd" d="M4 5H9V8a4 4 0 0 0 6 0V4H25V8a4 4 0 0 0 6 0V5H38Q41 5 41 8V38Q41 42 36 42H6Q1 42 1 38V8Q1 5 4 5ZM6 17V37H36V17Z" />
          <rect x="9.500" y="0" width="5" height="10" rx="2.500" />
          <rect x="26" y="0" width="5" height="10" rx="2.500" />
          <path d="M18 19.500h5.500v6H18zM26.500 19.500H32v6h-5.500zM10 28h5v6h-5zM18 28h5.500v6H18zM26.500 28H32v6h-5.500z" />
        </svg>
      ),
    },
    {
      name: "Lanyrd",
      art: (
        <svg viewBox="0 0 42 42" className={icon} fill="currentColor">
          <path d="M2 4.500L11 .3Q13 0 13.500 1.500L22.500 30.500L37 26Q39 25.500 39.500 27.500L41 34Q41 35.500 39.500 36L17 42Q15 42 14.500 40.500L1 7Q.5 5 2 4.500Z" />
        </svg>
      ),
    },
  ];
  return (
    <section className="flex flex-col items-center bg-white pt-[69px] pb-[67px]">
      <h2 className={`text-[32px] leading-10 font-bold text-black ${SERIF}`}>Keep Up to Date</h2>
      <div className="mt-7 h-[3px] w-[21%] bg-[#c1c1c1]" />
      <div className="mt-[74px] grid w-[67%] grid-cols-4">
        {items.map((it) => (
          <a key={it.name} href={`#${it.name.toLowerCase()}`} className="flex flex-col items-center gap-[15px] text-[#e54a25]">
            {it.art}
            <span className="text-[13px] leading-5 text-[#333] uppercase">{it.name}</span>
          </a>
        ))}
      </div>
    </section>
  );
}

function Footer() {
  const green = "text-[#7c9a1e]";
  return (
    <footer>
      <nav className="grid h-[58px] grid-cols-4 items-center bg-[#e54a1c] px-[15%]">
        {["Privacy", "Terms & conditions", "Code of conduct", "Accessibility"].map((l) => (
          <a key={l} href="#legal" className="text-center text-[13px] leading-5 font-bold text-white uppercase">
            {l}
          </a>
        ))}
      </nav>
      <div className="flex items-start justify-between bg-white pt-10 pr-[324px] pb-[19px] pl-[257px]">
        <div className="text-[#222]">
          <p className="text-[12px] leading-4">
            Presented by <a href="#clearleft" className={`font-bold ${green}`}>Clearleft</a>, a design consultancy based in Brighton, UK. Email us on{" "}
            <a href="mailto:ampersand@clearleft.com" className={green}>ampersand@clearleft.com</a>.
          </p>
          <p className="text-[10px] leading-[15px]">
            Ampersand © 2011–2015 Clearleft Ltd. All rights reserved. Set in <a href="#questa" className={green}>Questa &amp; Questa Sans</a>.
          </p>
        </div>
        <a href="#clearleft" className="flex h-[50px] shrink-0 items-center gap-2.5 text-[#333]">
          <svg viewBox="0 0 60 49" className="h-[50px] w-[60px]" aria-hidden="true">
            <path d="M0 17L20 8V40L0 41Z" fill="#e9f0d4" />
            <path d="M0 41L20 32L40 41L20 49Z" fill="#e9efd0" />
            <path d="M20 32V49L0 41Z" fill="#f1f5e2" />
            <path d="M20 8L40 0L60 8L40 17Z" fill="#c5e86c" />
            <path d="M20 8L40 17V41L20 32Z" fill="#7fb516" />
            <path d="M20 8V25L40 17Z" fill="#9fd03a" />
            <path d="M40 17L60 8V33L40 41Z" fill="#b4d334" />
          </svg>
          <span className="font-['Open_Sans',sans-serif] text-[27px] leading-9 font-light">Clearleft</span>
        </a>
      </div>
    </footer>
  );
}

export default function App() {
  return (
    <div className={`bg-white ${SANS}`}>
      <Header />
      <main>
        <Hero />
        <Intro />
        <Venues />
        <Travel />
        <BrightonMap />
        <WhereToEat />
        <Sponsors />
        <KeepUp />
      </main>
      <Footer />
    </div>
  );
}
